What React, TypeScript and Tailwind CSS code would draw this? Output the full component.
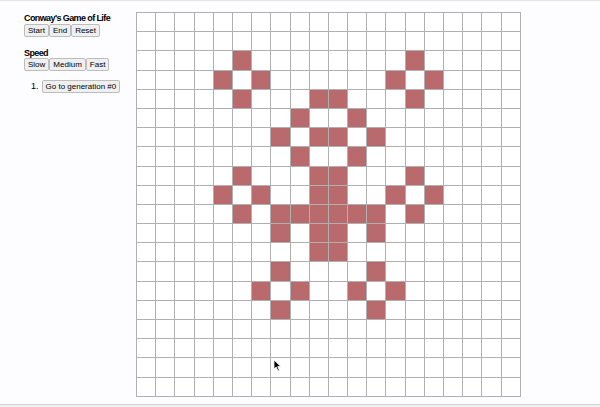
const SIZE = 20;

const LIVE: [number, number][] = [
  [2, 5], [3, 4], [3, 6], [4, 5],
  [2, 14], [3, 13], [3, 15], [4, 14],
  [4, 9], [4, 10],
  [5, 8], [5, 11],
  [6, 7], [6, 9], [6, 10], [6, 12],
  [7, 8], [7, 11],
  [8, 5], [8, 9], [8, 10], [8, 14],
  [9, 4], [9, 6], [9, 9], [9, 10], [9, 13], [9, 15],
  [10, 5], [10, 7], [10, 8], [10, 9], [10, 10], [10, 11], [10, 12], [10, 14],
  [11, 7], [11, 9], [11, 10], [11, 12],
  [12, 9], [12, 10],
  [13, 7], [13, 12],
  [14, 6], [14, 8], [14, 11], [14, 13],
  [15, 7], [15, 12],
];

const liveSet = new Set(LIVE.map(([r, c]) => `${r}-${c}`));

function Btn({ children }: { children: React.ReactNode }) {
  return (
    <button className="h-[13px] rounded-[2px] border border-[#bdbdbd] bg-[#efefef] px-[3px] text-[8px] leading-[11px] text-black">
      {children}
    </button>
  );
}

export default function App() {
  const cells = [];
  for (let r = 0; r < SIZE; r++) {
    for (let c = 0; c < SIZE; c++) {
      const alive = liveSet.has(`${r}-${c}`);
      cells.push(
        <div
          key={`${r}-${c}`}
          className={`h-[19.2px] border-r border-b border-[#b0b0b0] ${alive ? "bg-[#b86a6d]" : "bg-white"}`}
        />
      );
    }
  }

  return (
    <div className="relative flex h-[407px] w-[600px] flex-col overflow-hidden bg-[#fdfcfe] font-['Liberation_Sans',Arial,sans-serif] text-black">
      <div className="h-px bg-[#e4e4e4]" />
      <div className="flex h-[403px]">
        {/* Controls */}
        <div className="w-[136px] pl-6 pt-[11px]">
          <h1 className="text-[9px] font-bold leading-[12px] tracking-[-0.6px]">
            Conway's Game of Life
          </h1>
          <div className="flex">
            <Btn>Start</Btn>
            <Btn>End</Btn>
            <Btn>Reset</Btn>
          </div>

          <h2 className="mt-[11px] text-[9px] font-bold leading-[10px] tracking-[-0.6px]">
            Speed
          </h2>
          <div className="flex">
            <Btn>Slow</Btn>
            <Btn>Medium</Btn>
            <Btn>Fast</Btn>
          </div>

          <ol className="mt-[8px] flex items-center text-[9px]">
            <li className="flex items-center">
              <span className="ml-[7px] mr-[3px] leading-[14px]">1.</span>
              <Btn>Go to generation #0</Btn>
            </li>
          </ol>
        </div>

        {/* Board */}
        <div className="pt-[11px]">
          <div className="grid w-[385px] grid-cols-[repeat(20,19.2px)] border-l border-t border-[#b0b0b0]">
            {cells}
          </div>
        </div>
      </div>
      <div className="h-px bg-[#d2d2d2]" />
      <div className="flex-1 bg-[#f1f1f1]" />

      {/* Mouse pointer */}
      <svg className="absolute left-[273px] top-[359px]" width="9" height="13" viewBox="0 0 9 13">
        <path d="M1 1 L1 10 L3.2 8 L5 12 L6.4 11.3 L4.7 7.5 L7.8 7.5 Z" fill="black" stroke="white" strokeWidth="0.8" />
      </svg>
    </div>
  );
}
